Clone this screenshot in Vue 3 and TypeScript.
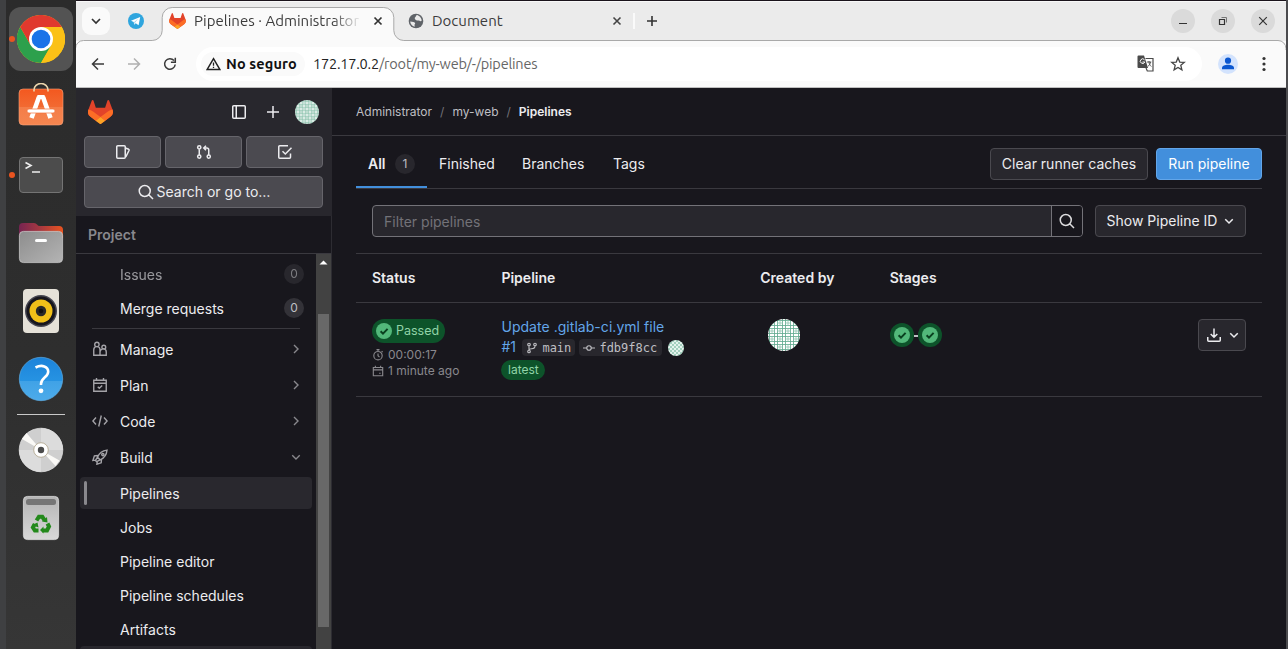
<script setup lang="ts">
interface NavItem {
  label: string
  icon: string
  open?: boolean
}

const icons: Record<string, string> = {
  sidebar: 'M2.75 1.75h10.5a1 1 0 0 1 1 1v10.5a1 1 0 0 1-1 1H2.75a1 1 0 0 1-1-1V2.75a1 1 0 0 1 1-1zM5.25 2v12',
  plus: 'M8 2v12M2 8h12',
  issues: 'M3.5 1.75h5.75a1 1 0 0 1 1 1v10.5a1 1 0 0 1-1 1H2.75a1 1 0 0 1-1-1V2.75a1 1 0 0 1 1-1zM10.5 4l3.2 1.3a.8.8 0 0 1 .4 1L10.8 13',
  merge: 'M3.25 5.25v5.5M3.25 1.75a1.6 1.6 0 1 1 0 3.2 1.6 1.6 0 0 1 0-3.2zM3.25 11a1.6 1.6 0 1 1 0 3.2 1.6 1.6 0 0 1 0-3.2zM12.75 11a1.6 1.6 0 1 1 0 3.2 1.6 1.6 0 0 1 0-3.2zM12.75 10.75V6a2 2 0 0 0-2-2H8M10 1.75 7.75 4 10 6.25',
  todo: 'M13.5 9.5v3.75a1 1 0 0 1-1 1h-9.75a1 1 0 0 1-1-1V2.75a1 1 0 0 1 1-1H11M5.5 7.25 8.3 10l6.2-6.2',
  search: 'M12.25 7a5.5 5.5 0 1 1-11 0 5.5 5.5 0 0 1 11 0zM11 11l4 4',
  manage: 'M4.9 1.2a2.2 2.2 0 1 1 0 4.4 2.2 2.2 0 0 1 0-4.4zM11.8 4.3a1.9 1.9 0 1 1 0 3.800 1.9 1.9 0 0 1 0-3.800zM8 14.250H1.750V8.700A3.100 3.100 0 0 1 8 8.700zM8.200 14.250h6.050V11a2.700 2.700 0 0 0-6-.5',
  plan: 'M1.75 3.25h12.5v11H1.75zM1.75 6.25h12.5M4.5 1v2M11.5 1v2M5.75 9.75 7.3 11.3l2.9-2.9',
  code: 'M4 4.5.9 8 4 11.5M12 4.5 15.1 8 12 11.5M9.3 2.5 6.7 13.5',
  build: 'M5.5 8.2C7 4.5 10.4 1.6 15 1.1c-.4 4.5-3 8-6.8 9.7zM5.8 6.500 2.400 6.900.9 11.500l2.800-.4M9.500 10.300l-.3 3.500-4.300 1.400.4-2.800M5.5 8.2 3.4 11.500l1.200 1.200 3.6-1.9M10.800 4.500a1.100 1.100 0 1 1 0 2.200 1.100 1.100 0 0 1 0-2.200z',
  right: 'M6 4l4 4-4 4',
  down: 'M4.25 6.25 8 10l3.75-3.75',
  clock: 'M8 3.25a5.6 5.6 0 1 1 0 11.2 5.6 5.6 0 0 1 0-11.2zM8 6v3l2 1.8M6 .9h4M8 1v2M12.8 2.8l1.4 1.4',
  calendar: 'M1.75 3.25h12.5v11H1.75zM1.75 6.5h12.5M4.5 1v2M11.5 1v2M9.5 11h2',
  branch: 'M4 5.3v5.4M4 1.6a1.7 1.7 0 1 1 0 3.4 1.7 1.7 0 0 1 0-3.4zM4 11a1.7 1.7 0 1 1 0 3.4A1.7 1.7 0 0 1 4 11zM12 1.6A1.7 1.7 0 1 1 12 5a1.7 1.7 0 0 1 0-3.4zM12 5.2c0 3-2 3.6-4.5 3.8C5.5 9.2 4 9.7 4 11',
  commit: 'M8 5a3 3 0 1 1 0 6 3 3 0 0 1 0-6zM0 8h5M11 8h5',
  download: 'M8 1.5V10M4.7 7 8 10.3 11.3 7M1.75 10v3.25a1 1 0 0 0 1 1h10.5a1 1 0 0 0 1-1V10',
  check: 'M4.6 8.2l2.4 2.4 4.6-4.7',
}

const nav: NavItem[] = [
  { label: 'Manage', icon: 'manage' },
  { label: 'Plan', icon: 'plan' },
  { label: 'Code', icon: 'code' },
  { label: 'Build', icon: 'build', open: true },
]
const buildItems = ['Pipelines', 'Jobs', 'Pipeline editor', 'Pipeline schedules', 'Artifacts']
</script>

<template>
  <div class="desktop">
    <svg class="defs" width="0" height="0">
      <defs>
        <pattern id="weave" width="8" height="8" patternUnits="userSpaceOnUse">
          <rect width="8" height="8" fill="#fff" />
          <path d="M0 1.500h8M0 6.500h8M1.500 0v8M6.500 0v8" stroke="#62ab90" stroke-width=".85" />
          <path d="M4 1.500v5M1.500 4h5" stroke="#8dc3ae" stroke-width=".8" />
        </pattern>
        <pattern id="checks" width="4" height="4" patternUnits="userSpaceOnUse">
          <rect width="4" height="4" fill="#e3f3ec" /><path d="M0 0h2v2H0zM2 2h2v2H2z" fill="#a3cfbe" />
        </pattern>
        <linearGradient id="orange" x2="0" y2="1"><stop stop-color="#f3581f" /><stop offset=".5" stop-color="#f26a32" /><stop offset=".51" stop-color="#f47d48" /><stop offset="1" stop-color="#f58650" /></linearGradient>
        <linearGradient id="folder" x2="1"><stop stop-color="#762451" /><stop offset=".5" stop-color="#a9393f" /><stop offset="1" stop-color="#e95420" /></linearGradient>
        <linearGradient id="metal" x2="1" y2="1"><stop stop-color="#8d8d8d" /><stop offset="1" stop-color="#b4b4b4" /></linearGradient>
        <linearGradient id="bin" x2="0" y2="1"><stop stop-color="#b4b4b4" /><stop offset="1" stop-color="#d8d8d8" /></linearGradient>
        <linearGradient id="blue" x2="0" y2="1"><stop stop-color="#1c83da" /><stop offset=".54" stop-color="#2693e2" /><stop offset=".55" stop-color="#40a2e6" /><stop offset="1" stop-color="#4dabea" /></linearGradient>
      </defs>
    </svg>

    <aside class="dock">
      <div class="slot selected running">
        <svg width="48" height="48" viewBox="0 0 48 48">
          <circle cx="24" cy="24" r="24" fill="#fbc116" />
          <path d="M24 24 13.6 30 3.2 12A24 24 0 0 0 24 48L34.4 30z" fill="#2da04c" />
          <path d="M3.2 12A24 24 0 0 1 44.8 12H24L13.6 30z" fill="#e0392e" />
          <path d="M24 12h20.8A24 24 0 0 1 24 48L34.4 30z" fill="#fbc116" />
          <circle cx="24" cy="24" r="12" fill="#fff" /><circle cx="24" cy="24" r="9.3" fill="#1a73e8" />
        </svg>
      </div>
      <div class="slot">
        <svg width="48" height="48" viewBox="0 0 48 48">
          <rect x="2" y="6" width="44" height="36" rx="4" fill="url(#orange)" stroke="#f9a27b" stroke-width=".6" />
          <path d="M17 8.500V7a7 6.500 0 0 1 14 0v1.500" fill="none" stroke="#ecd6ad" stroke-width="1.600" />
          <path d="M22 14 14.500 35M26 14l7.500 21" stroke="#fff" stroke-width="4.600" fill="none" />
          <rect x="10" y="26" width="28" height="4" rx="2" fill="#fff" stroke="#f2733d" stroke-width=".7" />
          <path d="M20.500 12h7l1 4h-9z" fill="#fff" />
        </svg>
      </div>
      <div class="slot running">
        <svg width="48" height="48" viewBox="0 0 48 48">
          <rect x="2.500" y="6.500" width="43" height="35" rx="3.500" fill="#4c4c4c" stroke="#747474" />
          <path d="M8.500 11.500l5.500 3-5.500 3M15 21h8" fill="none" stroke="#eee" stroke-width="1.600" />
        </svg>
      </div>
      <div class="slot">
        <svg width="48" height="48" viewBox="0 0 48 48">
          <path d="M2 18V8a4 4 0 0 1 4-4h11q2 0 3 1.500T23 7h19a4 4 0 0 1 4 4v8z" fill="url(#folder)" />
          <rect x="2.400" y="12.400" width="43.200" height="31.200" rx="4" fill="url(#metal)" stroke="#c7c7c7" stroke-width=".8" />
          <rect x="18" y="20" width="12" height="3" rx="1.500" fill="#fff" />
        </svg>
      </div>
      <div class="slot">
        <svg width="48" height="48" viewBox="0 0 48 48">
          <rect x="6" y="2" width="36" height="44" rx="4" fill="#e5e1d8" />
          <circle cx="24" cy="24" r="16" fill="#454550" /><circle cx="24" cy="24" r="14.500" fill="#17161e" />
          <circle cx="24" cy="24" r="11.500" fill="#f1c019" /><circle cx="24" cy="24" r="5.200" fill="#292929" /><circle cx="24" cy="24" r="2.300" fill="#111" />
        </svg>
      </div>
      <div class="slot">
        <svg width="48" height="48" viewBox="0 0 48 48">
          <circle cx="24" cy="24" r="21.700" fill="url(#blue)" stroke="#62b3ec" stroke-width=".6" />
          <path d="M18.500 12.500c6.500-3.300 12.700-1 12.700 4.200 0 5.500-7.200 5.800-7.200 12.300v1" fill="none" stroke="#fff" stroke-width="2.600" /><circle cx="24" cy="35.800" r="2.400" fill="#fff" />
        </svg>
      </div>
      <div class="separator"></div>
      <div class="slot">
        <svg width="48" height="48" viewBox="0 0 48 48">
          <circle cx="24" cy="24" r="21.800" fill="#cfcfcf" stroke="#e6e6e6" stroke-width=".7" />
          <path d="M24 24V2A22 22 0 0 1 46 24zM24 24v22A22 22 0 0 1 2 24z" fill="#dcdcdc" />
          <path d="M24 24 5 13l4.500-6zM24 24l14.500 16 4-5.500z" fill="#faf9f6" />
          <circle cx="24" cy="24" r="7.300" fill="#fff" stroke="#b9b09b" /><circle cx="24" cy="24" r="3.200" fill="#4b4b4b" />
        </svg>
      </div>
      <div class="slot">
        <svg width="48" height="48" viewBox="0 0 48 48">
          <rect x="6.400" y="2.400" width="35.200" height="43.200" rx="4" fill="url(#bin)" stroke="#dedede" stroke-width=".8" />
          <rect x="9" y="5" width="30" height="6" rx="2.500" fill="#767676" />
          <g fill="none" stroke="#23891b" stroke-width="4">
            <path d="M19.500 26.500l2.400-3.700h3.400l2.200 3.400" /><path d="M30.500 29.500l1.500 3-2 4h-4.500" /><path d="M17.800 30l-1.900 3.500 2 3h3.600" />
          </g>
          <path d="M25 27.500l5.500 1-.5-5.500zM26.500 32.500v7l-3.500-3.500zM15 31l5.500-2.500 1 5z" fill="#23891b" />
        </svg>
      </div>
    </aside>

    <div class="window">
      <header class="tabstrip">
        <svg class="outline" width="1210" height="50" viewBox="0 0 1210 50">
          <path d="M-.5 50v-1.500a8 8 0 0 1 8-8h68.700a10 10 0 0 0 10-10V17.500a10 10 0 0 1 10-10h211.600a10 10 0 0 1 10 10v13a10 10 0 0 0 10 10h874.200a8 8 0 0 1 8 8V50" fill="#fafafa" stroke="#a9a9a9" />
        </svg>
        <span class="tab-search"><svg width="12" height="12" viewBox="0 0 12 12"><path d="M2 4l4 4 4-4" fill="none" stroke="#333" stroke-width="1.700" /></svg></span>
        <svg class="telegram" width="16" height="16" viewBox="0 0 16 16"><circle cx="8" cy="8" r="8" fill="#2fa5de" /><path d="M3 7.700 12.200 4l-1.600 8.200-2.900-2-1.500 1.500-.5-2.700z" fill="#fff" /><path d="M6.200 11.500V9l4-3.400-3 4z" fill="#a8d3ec" /></svg>
        <div class="tab active">
          <svg class="favicon" width="17" height="16" viewBox="0 0 25 24">
            <path d="m24.507 9.500-.034-.090L21.082.562a.896.896 0 0 0-1.694.091l-2.290 7.010H7.825L5.535.653a.898.898 0 0 0-1.694-.090L.451 9.411.416 9.500a6.297 6.297 0 0 0 2.090 7.278l5.202 3.899 4.114 3.111a1.051 1.051 0 0 0 1.268 0l4.115-3.111 5.211-3.900A6.297 6.297 0 0 0 24.507 9.500Z" fill="#e24329" />
            <path d="M24.473 9.410a11.440 11.440 0 0 0-4.560 2.051l-7.447 5.632 4.742 3.584 5.211-3.900A6.297 6.297 0 0 0 24.473 9.410ZM5.010 11.461A11.430 11.430 0 0 0 .45 9.411a6.297 6.297 0 0 0 2.056 7.367l5.202 3.899 4.745-3.584z" fill="#fc6d26" />
            <path d="m7.707 20.677 4.115 3.111a1.051 1.051 0 0 0 1.268 0l4.115-3.111-4.743-3.584z" fill="#fca326" />
          </svg>
          <span class="tab-title fade">Pipelines · Administrator</span>
          <svg width="10" height="10" viewBox="0 0 10 10"><path d="M1.500 1.500l7 7M8.500 1.500l-7 7" stroke="#333" stroke-width="1.700" /></svg>
        </div>
        <div class="tab second">
          <svg class="globe" width="16" height="16" viewBox="0 0 16 16"><circle cx="8" cy="8" r="7.300" fill="#5f6368" /><path d="M2.200 8.500 5.500 9c2 .3 2 2 1 2.500l.2 2.300C4 13.200 2.300 11 2.200 8.500zM7 4.500c1-.2.600-2 2-2.500 2 .4 4.500 2.700 4.700 5.500-.7 1.500-1.700.3-2.700 0s-2.500.5-3.500-.7c-.8-1-.9-2-.5-2.300z" fill="#ebebeb" /></svg>
          <span class="tab-title doc">Document</span>
          <svg width="10" height="10" viewBox="0 0 10 10"><path d="M1.500 1.500l7 7M8.500 1.500l-7 7" stroke="#444" stroke-width="1.600" /></svg>
        </div>
        <span class="tab-sep"></span>
        <svg class="new-tab" width="12" height="12" viewBox="0 0 12 12"><path d="M6 1v10M1 6h10" stroke="#333" stroke-width="1.600" /></svg>
        <div class="controls">
          <span><svg width="12" height="12" viewBox="0 0 12 12"><path d="M2 8.500h8" stroke="#333" /></svg></span>
          <span><svg width="12" height="12" viewBox="0 0 12 12"><path d="M2.500 4.500h5v5h-5z" stroke="#333" stroke-width="1.200" fill="none" /><path d="M4.500 2.500h5v5" stroke="#777" fill="none" /></svg></span>
          <span><svg width="12" height="12" viewBox="0 0 12 12"><path d="M2.200 2.200l7.600 7.600M9.800 2.200 2.200 9.800" stroke="#333" stroke-width="1.200" /></svg></span>
        </div>
      </header>

      <div class="toolbar">
        <svg class="tool back" width="16" height="16" viewBox="0 0 16 16"><path d="M14 8H3M8 2.500 2.500 8 8 13.500" /></svg>
        <svg class="tool forward" width="16" height="16" viewBox="0 0 16 16"><path d="M2 8h11M8 2.500 13.500 8 8 13.500" /></svg>
        <svg class="tool reload" width="16" height="16" viewBox="0 0 16 16"><path d="M13.200 8.500A5.300 5.300 0 1 1 12 4.600M13.300 1.800v4.400H8.900" /></svg>
        <div class="address">
          <div class="security">
            <svg width="15" height="14" viewBox="0 0 15 14"><path d="M7.500 1.700 13.800 12.400H1.200z" fill="none" stroke="#222" stroke-width="1.500" /><path d="M7.500 5.500v3.300M7.500 9.800v1.300" stroke="#222" stroke-width="1.300" /></svg>
            <span>No seguro</span>
          </div>
          <p class="url"><b>172.17.0.2</b>/root/my-web/-/pipelines</p>
          <svg class="translate" width="17" height="17" viewBox="0 0 17 17">
            <path d="M.5 1.500a1 1 0 0 1 1-1H7l4 12.500H1.500a1 1 0 0 1-1-1z" fill="#4a4a4a" />
            <path d="M7.500 4.800A2.300 2.300 0 1 0 7.800 7H5.500" fill="none" stroke="#fff" />
            <path d="M8.500 3.500h7.500v12.500H10.300L9 13" fill="none" stroke="#4a4a4a" stroke-width="1.200" />
            <path d="M9.800 7h4.500M12 6v1c0 1.500 1 3.500 2.300 4.500M13.500 7c-.2 2-1.500 3.500-2.700 4.500" fill="none" stroke="#4a4a4a" stroke-width=".9" />
          </svg>
          <svg class="star" width="16" height="16" viewBox="0 0 16 16"><path d="M8 1.800l1.750 4.250 4.550.350-3.500 2.950 1.100 4.450L8 11.400l-3.900 2.400 1.100-4.450-3.500-2.950 4.550-.350z" fill="none" stroke="#444" stroke-width="1.300" /></svg>
        </div>
        <span class="profile"><svg width="20" height="20" viewBox="0 0 20 20"><circle cx="10" cy="6.700" r="3.100" fill="#0b57d0" /><path d="M4 15.300v-1.500c0-2 3-3.100 6-3.100s6 1.100 6 3.100v1.500z" fill="#0b57d0" /></svg></span>
        <svg class="menu" width="4" height="16" viewBox="0 0 4 16"><g fill="#333"><circle cx="2" cy="2.500" r="1.600" /><circle cx="2" cy="8" r="1.600" /><circle cx="2" cy="13.500" r="1.600" /></g></svg>
      </div>

      <div class="page">
        <nav class="sidebar">
          <div class="side-head">
            <div class="brand">
              <svg class="tanuki" width="25" height="24" viewBox="0 0 25 24">
                <path d="m24.507 9.500-.034-.090L21.082.562a.896.896 0 0 0-1.694.091l-2.290 7.010H7.825L5.535.653a.898.898 0 0 0-1.694-.090L.451 9.411.416 9.500a6.297 6.297 0 0 0 2.090 7.278l5.202 3.899 4.114 3.111a1.051 1.051 0 0 0 1.268 0l4.115-3.111 5.211-3.900A6.297 6.297 0 0 0 24.507 9.500Z" fill="#e24329" />
                <path d="M24.473 9.410a11.440 11.440 0 0 0-4.560 2.051l-7.447 5.632 4.742 3.584 5.211-3.900A6.297 6.297 0 0 0 24.473 9.410ZM5.010 11.461A11.430 11.430 0 0 0 .45 9.411a6.297 6.297 0 0 0 2.056 7.367l5.202 3.899 4.745-3.584z" fill="#fc6d26" />
                <path d="m7.707 20.677 4.115 3.111a1.051 1.051 0 0 0 1.268 0l4.115-3.111-4.743-3.584z" fill="#fca326" />
              </svg>
              <svg class="icon panel" viewBox="0 0 16 16"><path :d="icons.sidebar" /></svg>
              <svg class="icon" viewBox="0 0 16 16"><path :d="icons.plus" /></svg>
              <svg class="avatar" width="24" height="24" viewBox="0 0 32 32"><circle cx="16" cy="16" r="16" fill="url(#weave)" /></svg>
            </div>
            <div class="shortcuts">
              <button v-for="name in ['issues', 'merge', 'todo']" :key="name"><svg class="icon" viewBox="0 0 16 16"><path :d="icons[name]" /></svg></button>
            </div>
            <button class="search"><svg class="icon" viewBox="0 0 16 16"><path :d="icons.search" /></svg><span>Search or go to…</span></button>
          </div>
          <h2>Project</h2>
          <div class="scroller">
            <div class="items">
              <div class="link faded"><span>Issues</span><em>0</em></div>
              <div class="link"><span>Merge requests</span><em>0</em></div>
              <hr />
              <div v-for="item in nav" :key="item.label" class="group">
                <svg class="icon" viewBox="0 0 16 16"><path :d="icons[item.icon]" /></svg>
                <span>{{ item.label }}</span>
                <svg class="icon chevron" viewBox="0 0 16 16"><path :d="item.open ? icons.down : icons.right" /></svg>
              </div>
              <div v-for="(label, i) in buildItems" :key="label" class="link" :class="{ current: i === 0 }"><span>{{ label }}</span></div>
              <div class="next"></div>
            </div>
            <div class="scrollbar"><svg width="15" height="15" viewBox="0 0 15 15"><path d="M3.500 10.500 7.500 6.500l4 4z" fill="#fff" /></svg><i></i></div>
          </div>
        </nav>

        <main>
          <div class="crumbs"><span>Administrator</span><i>/</i><span>my-web</span><i>/</i><b>Pipelines</b></div>
          <div class="content">
            <div class="tabs">
              <a class="on"><b>All</b><em>1</em></a><a class="finished">Finished</a><a class="branches">Branches</a><a>Tags</a>
              <div class="actions"><button class="btn clear"><span>Clear runner caches</span></button><button class="btn run"><span>Run pipeline</span></button></div>
            </div>
            <div class="filter">
              <div class="field"><span>Filter pipelines</span><button><svg class="icon" viewBox="0 0 16 16"><path :d="icons.search" /></svg></button></div>
              <button class="btn show"><span>Show Pipeline ID</span><svg class="icon" viewBox="0 0 16 16"><path :d="icons.down" /></svg></button>
            </div>
            <div class="row head"><b>Status</b><b>Pipeline</b><b>Created by</b><b>Stages</b></div>
            <div class="row body">
              <div class="status">
                <span class="badge"><svg width="16" height="16" viewBox="0 0 16 16"><circle cx="8" cy="8" r="8" fill="#52b87a" /><path :d="icons.check" class="tick" /></svg><span>Passed</span></span>
                <div class="meta"><svg class="icon" viewBox="0 0 16 16"><path :d="icons.clock" /></svg><span>00:00:17</span></div>
                <div class="meta"><svg class="icon" viewBox="0 0 16 16"><path :d="icons.calendar" /></svg><span>1 minute ago</span></div>
              </div>
              <div class="pipeline">
                <a class="title">Update .gitlab-ci.yml file</a>
                <div class="refs">
                  <a>#1</a>
                  <span class="ref main-ref"><svg class="icon" viewBox="0 0 16 16"><path :d="icons.branch" /></svg><span>main</span></span>
                  <span class="ref sha"><svg class="icon" viewBox="0 0 16 16"><path :d="icons.commit" /></svg><span>fdb9f8cc</span></span>
                  <svg class="mini" width="16" height="16" viewBox="0 0 16 16"><circle cx="8" cy="8" r="8" fill="url(#checks)" /></svg>
                </div>
                <span class="latest">latest</span>
              </div>
              <div><svg class="creator" width="32" height="32" viewBox="0 0 32 32"><circle cx="16" cy="16" r="16" fill="url(#weave)" /></svg></div>
              <div class="stages">
                <span v-for="n in 2" :key="n"><svg width="24" height="24" viewBox="0 0 24 24"><circle cx="12" cy="12" r="12" fill="#0d532a" /><circle cx="12" cy="12" r="8" fill="#52b87a" /><path class="tick" d="M8.600 12.200l2.400 2.400 4.600-4.700" /></svg></span>
              </div>
              <div class="end"><button class="btn download"><svg class="icon" viewBox="0 0 16 16"><path :d="icons.download" /></svg><svg class="icon" viewBox="0 0 16 16"><path :d="icons.down" /></svg></button></div>
            </div>
          </div>
        </main>
      </div>
    </div>
  </div>
</template>

<style>
html, body { margin: 0; overflow: hidden; background: #18171d; }
</style>

<style scoped>
* { box-sizing: border-box; }
svg { flex: none; display: block; }
button { font: inherit; color: inherit; padding: 0; margin: 0; }
.defs { position: absolute; }
.desktop { display: flex; width: 1288px; height: 649px; overflow: hidden; background: #3f4042; border-right: 2px solid #4b4b4e; font-family: Inter, "Liberation Sans", sans-serif; }
.dock { flex: none; width: 70px; margin-left: 6px; padding-top: 5px; background: linear-gradient(#2b2b2b, #2e2e2e 55%, #363636); }
.slot { position: relative; height: 68px; display: flex; align-items: center; justify-content: center; }
.slot.selected { height: 64px; margin: 2px 3px; border-radius: 12px; background: #535353; }
.running::before { content: ""; position: absolute; left: 3px; top: 31px; width: 6px; height: 6px; border-radius: 50%; background: #e95420; }
.selected.running::before { left: 0; top: 29px; }
.separator { height: 1px; margin: 1px 11px; background: #c9c9c9; }

.window { flex: none; width: 1210px; border-top: 1px solid #1a131b; background: #fafafa; font-size: 14px; }
.tabstrip { position: relative; display: flex; align-items: center; height: 40px; padding-bottom: 2px; background: #ebebeb; border-top: 1px solid #f8f8f8; font-family: Ubuntu, "Noto Sans", sans-serif; color: #3c3c3c; }
.outline { position: absolute; left: 0; top: -2px; }
.tab-search { position: relative; width: 28px; height: 28px; margin-left: 6px; border-radius: 9px; background: #fafafa; display: grid; place-items: center; }
.telegram { position: relative; margin-left: 18px; }
.tab { position: relative; display: flex; align-items: center; }
.active { width: 232px; margin-left: 18px; padding-left: 7px; }
.tab-title { font-size: 15px; line-height: 20px; white-space: nowrap; overflow: hidden; }
.fade { width: 168px; margin: 0 11px 0 8px; letter-spacing: .02px; mask-image: linear-gradient(90deg, #000 82%, transparent); }
.second { width: 228px; padding-left: 14px; }
.doc { width: 171px; margin: 0 15px 0 8px; }
.tab-sep { width: 2px; height: 16px; margin-left: 11px; background: #fafafa; position: relative; }
.new-tab { margin-left: 11px; position: relative; }
.controls { margin-left: auto; margin-right: 11px; display: flex; gap: 16px; position: relative; }
.controls span { width: 24px; height: 24px; border-radius: 50%; background: #dadada; display: grid; place-items: center; }
.toolbar { position: relative; display: flex; align-items: center; height: 47px; padding-bottom: 1px; border-bottom: 1px solid #bfbfbf; font-family: Ubuntu, "Noto Sans", sans-serif; }
.tool { fill: none; stroke: #3a3a3a; stroke-width: 1.5; }
.back { margin-left: 14px; }
.forward { margin-left: 20px; stroke: #b0b0b0; }
.reload { margin-left: 20px; }
.address { display: flex; align-items: center; width: 1006px; height: 34px; margin-left: 18px; border-radius: 17px; background: #fff; }
.security { display: flex; align-items: center; gap: 5px; width: 104px; height: 24px; margin-left: 5px; padding-left: 5px; border-radius: 12px; background: #fafafa; font-size: 14.5px; font-weight: 600; color: #111; white-space: nowrap; }
.security span { letter-spacing: .12px; }
.url { margin: 0 0 0 8px; font-size: 14.5px; letter-spacing: -.2px; color: #666; }
.url b { font-weight: 400; color: #222; }
.translate { margin-left: auto; }
.star { margin: 0 16px 0 16px; }
.profile { width: 20px; height: 20px; border-radius: 50%; background: #d3e3fd; margin-left: 16px; }
.menu { margin-left: 24px; }

.page { display: flex; height: 561px; background: #18171d; color: #ececef; }
.icon { width: 16px; height: 16px; fill: none; stroke: currentColor; stroke-width: 1.5; }
.sidebar { flex: none; width: 256px; border-right: 1px solid #2d2c32; display: flex; flex-direction: column; }
.side-head { height: 128px; padding: 12px 8px 8px 8px; background: #28272d; width: 256px; }
.brand { display: flex; align-items: center; height: 24px; padding: 0 5px 0 4px; gap: 18px; }
.tanuki { margin-right: auto; }
.brand .avatar { margin-left: -4px; }
.shortcuts { display: flex; gap: 4px; margin-top: 12px; width: 239px; }
.shortcuts button, .search { flex: 1; height: 32px; display: flex; align-items: center; justify-content: center; border: 1px solid #66656b; border-radius: 4px; background: #4b4a50; }
.search { width: 239px; margin-top: 8px; gap: 3px; padding-left: 1px; }
.search span { margin-top: -2px; }
.sidebar h2 { margin: 0; height: 38px; padding-left: 12px; border-bottom: 1px solid #3a393f; font-size: 14px; line-height: 37px; font-weight: 600; color: #89888d; }
.scroller { display: flex; height: 395px; overflow: hidden; }
.items { width: 240px; padding-top: 4px; }
.link { display: flex; align-items: center; height: 32px; margin: 0 4px 2px; padding-left: 40px; border-radius: 4px; position: relative; }
.link em { margin-left: auto; margin-right: 8px; width: 20px; height: 20px; border-radius: 50%; background: #333238; font: normal 12px/20px Inter, sans-serif; text-align: center; color: #bfbfc3; }
.faded { opacity: .6; }
.items hr { margin: 4px 16px 2px; border: 0; border-top: 1px solid #3a393f; }
.group { display: flex; align-items: center; height: 36px; padding: 0 12px 0 16px; color: #ececef; }
.group .icon { color: #a4a3a8; stroke-width: 1.4; }
.group span { margin-left: 12px; }
.group .chevron { margin-left: auto; color: #89888d; }
.current { margin-top: 2px; background: #29282e; }
.current::before { content: ""; position: absolute; left: 4px; top: 4px; width: 3px; height: 24px; border-radius: 2px; background: #89888d; }
.next { height: 8px; margin: -1px 4px 0; border-radius: 4px; background: #28272d; }
.scrollbar { width: 15px; background: #424242; position: relative; }
.scrollbar i { display: block; width: 11px; height: 313px; margin: 45px 0 0 2px; background: #686868; }

main { flex: 1; min-width: 0; }
.crumbs { display: flex; align-items: center; height: 48px; padding-left: 24px; border-bottom: 1px solid #3a393f; font-size: 12px; color: #bfbfc3; }
.crumbs i { margin: 0 8px; font-style: normal; color: #737278; }
.crumbs b { font-weight: 600; color: #ececef; }
.content { padding: 0 24px; }
.tabs { display: flex; height: 53px; border-bottom: 1px solid #3a393f; }
.tabs a { display: flex; align-items: center; padding: 3px 12px 0; height: 52px; }
.tabs .on { width: 71px; border-bottom: 2px solid #428fdc; padding-top: 5px; }
.tabs b { font-weight: 600; }
.tabs em { width: 20px; height: 20px; margin-left: auto; border-radius: 50%; background: #28272d; font: normal 12px/20px Inter, sans-serif; text-align: center; color: #bfbfc3; }
.finished { width: 83px; }
.branches { width: 91px; }
.actions { margin-left: auto; display: flex; gap: 8px; padding-top: 12px; }
.btn { height: 32px; display: flex; align-items: center; justify-content: center; border: 1px solid #4a494f; border-radius: 4px; background: #28272d; white-space: nowrap; }
.btn span { margin-top: -2px; }
.clear { width: 158px; }
.run { width: 106px; border-color: #63a6e9; background: #428fdc; color: #fff; }
.filter { display: flex; gap: 12px; height: 65px; padding: 16px 16px 0; border-bottom: 1px solid #3a393f; }
.field { display: flex; align-items: center; width: 711px; height: 32px; border: 1px solid #737278; border-radius: 4px; background: #28272d; color: #737278; padding-left: 11px; }
.field button { width: 31px; height: 30px; margin-left: auto; border: 0; border-left: 1px solid #737278; border-radius: 0 3px 3px 0; background: #18171d; display: grid; place-items: center; color: #dcdcde; }
.show { width: 151px; gap: 4px; padding-left: 3px; }
.row { display: grid; grid-template-columns: 1fr 2fr 1fr 1fr 2fr; border-bottom: 1px solid #3a393f; }
.row > * { padding: 0 16px; }
.head { height: 49px; align-items: center; padding-bottom: 2px; }
.head b { font-weight: 600; white-space: nowrap; }
.body { height: 94px; padding-top: 16px; }
.badge { display: flex; align-items: center; width: 73px; height: 24px; padding-left: 4px; gap: 4px; border-radius: 12px; background: #0d532a; color: #91d4a8; font-size: 12.5px; }
.badge span { margin-top: -1px; }
.tick { fill: none; stroke: #0a4020; stroke-width: 2; }
.meta { display: flex; align-items: center; height: 16px; gap: 4px; font-size: 12px; color: #89888d; white-space: nowrap; }
.meta span { margin-top: -2px; }
.meta .icon { width: 12px; height: 12px; }
.badge + .meta { margin-top: 4px; }
.title { display: block; line-height: 16px; letter-spacing: .04px; color: #63a6e9; white-space: nowrap; }
.refs { display: flex; align-items: center; height: 24px; color: #63a6e9; }
.refs a { width: 21px; margin-top: -1px; }
.ref { display: flex; align-items: center; height: 17px; border-radius: 4px; background: #28272d; color: #bfbfc3; font-family: "DejaVu Sans Mono", monospace; font-size: 12px; padding: 0 4px; gap: 4px; }
.ref .icon { width: 12px; height: 12px; }
.main-ref { width: 53px; margin-top: 1px; }
.sha { width: 83px; margin-left: 4px; margin-top: 1px; }
.mini { margin-left: 6px; margin-top: 2px; }
.latest { display: block; width: 44px; height: 20px; margin-top: 1px; border-radius: 10px; background: #0d532a; color: #91d4a8; font-size: 12px; line-height: 19px; text-align: center; }
.creator { margin-left: 8px; }
.stages { display: flex; padding-top: 4px; height: 28px; }
.stages span + span { margin-left: 4px; position: relative; }
.stages span + span::before { content: ""; position: absolute; left: -4px; top: 12px; width: 4px; height: 2px; background: #bfbfc3; }
.end { display: flex; justify-content: flex-end; }
.download { width: 48px; gap: 4px; padding-left: 3px; }
</style>
